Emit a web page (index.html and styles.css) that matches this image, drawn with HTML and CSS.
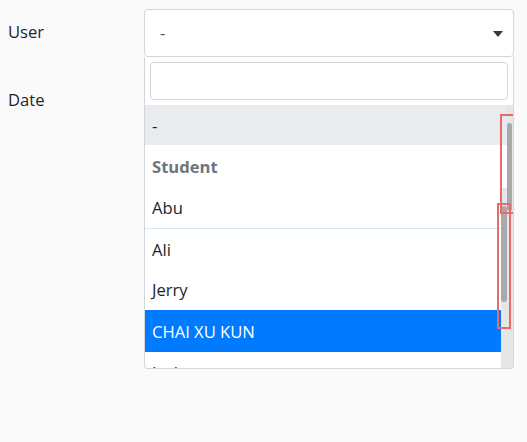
FILE: index.html
```html
<!DOCTYPE html>
<html>
<head>
<meta charset="utf-8">
<link rel="stylesheet" href="styles.css">
</head>
<body>
<div class="form">
  <div class="row row-user">
    <label class="label">User</label>
    <div class="select-wrap">
      <div class="select">
        <span class="select-value">-</span>
        <span class="arrow"></span>
      </div>
      <div class="dropdown">
        <div class="search-box"><div class="search"></div></div>
        <div class="results">
          <div class="opt opt-hl">-</div>
          <div class="opt group">Student</div>
          <div class="opt">Abu</div>
          <div class="opt opt-ali">Ali</div>
          <div class="opt">Jerry</div>
          <div class="opt opt-sel">CHAI XU KUN</div>
          <div class="opt">Jack</div>
        </div>
        <div class="track track-a"><div class="thumb thumb-a"></div></div>
        <div class="track track-b"><div class="thumb thumb-b"></div></div>
        <div class="mark mark-a"></div>
        <div class="mark mark-b"></div>
      </div>
    </div>
  </div>
  <div class="row row-date">
    <label class="label">Date</label>
  </div>
</div>
</body>
</html>
```
FILE: styles.css
```css
* { box-sizing: border-box; }
html, body { margin: 0; padding: 0; }
body {
  background: #fafafa;
  font-family: "Open Sans", "Noto Sans", sans-serif;
  font-size: 16.6px;
  color: #212529;
  width: 527px;
  height: 442px;
  overflow: hidden;
}
.form { padding: 9px 13px 0 8px; }
.row { display: flex; align-items: center; }
.label { width: 136px; flex: none; line-height: 24px; margin-top: -2px; }
.row-date { margin-top: 33px; align-items: flex-start; }
.select-wrap { position: relative; flex: 1; }
.select {
  height: 48px;
  background: #fff;
  border: 1px solid #d3d6da;
  border-radius: 4px;
  display: flex;
  align-items: center;
  padding: 0 10px 0 15px;
  color: #495057;
}
.select-value { flex: 1; margin-top: -1px; }
.arrow {
  width: 0; height: 0;
  border-left: 5px solid transparent;
  border-right: 5px solid transparent;
  border-top: 6px solid #343a40;
  margin-top: 1px;
}
.dropdown {
  position: absolute;
  left: 0; right: 0;
  top: 48px;
  height: 312px;
  background: #fff;
  border: 1px solid #d3d6da;
  border-top: none;
  border-radius: 0 0 4px 4px;
  overflow: hidden;
}
.search-box { padding: 5px; }
.search {
  height: 38px;
  border: 1px solid #d3d6da;
  border-radius: 4px;
  background: #fff;
}
.results { height: 263px; overflow: hidden; }
.opt {
  height: 41px;
  line-height: 40px;
  padding-top: 1px;
  padding-left: 7px;
  color: #212529;
  white-space: nowrap;
}
.opt-hl { background: #e9ecef; height: 40px; line-height: 39px; }
.group { font-weight: 700; color: #6c757d; height: 42px; line-height: 41px; }
.opt-ali { border-top: 1px solid #d8e7f8; }
.opt-sel { background: #007bff; color: #fff; height: 42px; line-height: 41px; }
.track { position: absolute; background: #e6e6e6; }
.track-a { left: 362px; width: 6px; top: 48px; bottom: 0; }
.track-b { left: 356px; width: 6px; top: 131px; bottom: 0; }
.thumb { position: absolute; background: #a9a9a9; border-radius: 3px; }
.thumb-a { left: 0; width: 5px; top: 18px; height: 88px; }
.thumb-b { left: 0; width: 6px; top: 18px; height: 96px; }
.mark { position: absolute; border: 2px solid #e86a6a; }
.mark-a { left: 355px; top: 57px; width: 20px; height: 100px; }
.mark-b { left: 352px; top: 146px; width: 14px; height: 126px; }
```
